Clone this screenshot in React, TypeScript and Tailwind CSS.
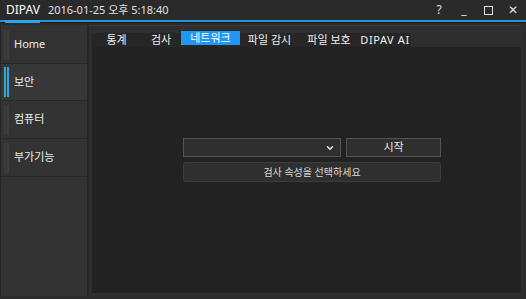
import { ChevronDown } from "lucide-react";

const font = { fontFamily: '"Noto Sans", "Noto Sans CJK KR", sans-serif' };

const menu = [
  { label: "Home", active: false, h: "h-[38px]" },
  { label: "보안", active: true, h: "h-[37px]" },
  { label: "컴퓨터", active: false, h: "h-[38px]" },
  { label: "부가기능", active: false, h: "h-[38px]" },
];

const tabs = [
  { label: "통계", w: "w-[49px]" },
  { label: "검사", w: "w-[40px]" },
  { label: "네트워크", w: "w-[59px]", active: true },
  { label: "파일 감시", w: "w-[59px]" },
  { label: "파일 보호", w: "w-[60px]" },
  { label: "DIPAV AI", w: "w-[52px] tracking-[0.6px]" },
];

export default function App() {
  return (
    <div
      className="w-[526px] h-[299px] bg-[#2c2c2c] flex flex-col overflow-hidden text-[#e8e8e8]"
      style={font}
    >
      {/* title bar */}
      <div className="h-[20px] flex items-center bg-[#2a2a2a] pl-[6px]">
        <span className="text-[12px] text-white">DIPAV</span>
        <span className="ml-[8px] text-[11px] text-[#e0e0e0]">2016-01-25 오후 5:18:40</span>
        <div className="ml-auto flex items-center text-[12px] text-[#e0e0e0]">
          <span className="w-[26px] text-center">?</span>
          <span className="w-[24px] text-center">_</span>
          <span className="w-[24px] flex justify-center">
            <span className="w-[9px] h-[9px] border border-[#e0e0e0]" />
          </span>
          <span className="w-[26px] text-center">✕</span>
        </div>
      </div>
      <div className="h-[3px] bg-[#1c1c1c] relative">
        <div className="h-[2px] bg-[#2596e0]" />
        <div className="absolute left-[5px] top-0 w-[35px] h-[3px] bg-[#2aa6f0]" />
      </div>

      <div className="flex-1 flex pt-[2px] pb-[3px] pr-[4px]">
        {/* sidebar */}
        <div className="w-[89px] bg-[#333333] border-l border-[#262626] border-r-2 border-r-[#262626] flex flex-col pt-[1px]">
          {menu.map((m) => (
            <div
              key={m.label}
              className={`${m.h} flex items-center border-b border-[#272727] ${
                m.active ? "bg-[#373737]" : ""
              }`}
            >
              <div className="flex gap-[1px] ml-[3px] h-[30px]">
                <div className={`w-[2px] h-full ${m.active ? "bg-[#2aa8e0]" : "bg-[#3e3e3e]"}`} />
                <div className={`w-[2px] h-full ${m.active ? "bg-[#2aa8e0]" : "bg-[#3e3e3e]"}`} />
              </div>
              <span className="ml-[5px] text-[11px] text-[#ececec]">{m.label}</span>
            </div>
          ))}
        </div>

        {/* main panel */}
        <div className="flex-1 bg-[#2e2e2e] border-t border-[#3a3a3a] flex flex-col pt-[7px] pl-[3px] pr-[1px] pb-[3px]">
          <div className="h-[14px] flex">
            <div className="flex bg-[#262626] h-[14px]">
              {tabs.map((t) => (
                <div
                  key={t.label}
                  className={`${t.w} relative flex justify-center text-[11px] leading-[14px] text-[#f0f0f0]`}
                >
                  {t.active ? (
                    <div className="absolute left-0 right-0 -top-[2px] h-[14px] bg-[#2196f3] text-white text-center leading-[14px]">
                      {t.label}
                    </div>
                  ) : (
                    t.label
                  )}
                </div>
              ))}
            </div>
          </div>
          <div className="flex-1 bg-[#222222] flex flex-col pt-[91px] pl-[91px]">
            <div className="w-[258px] flex gap-[5px]">
              <div className="w-[158px] h-[19px] bg-[#2f2f2f] border border-[#555555] flex items-center justify-end pr-[5px]">
                <ChevronDown size={10} strokeWidth={3.5} className="text-[#e8e8e8]" />
              </div>
              <div className="flex-1 h-[19px] bg-[#2f2f2f] border border-[#555555] flex items-center justify-center text-[11px] text-[#e8e8e8]">
                시작
              </div>
            </div>
            <div className="w-[258px] h-[20px] mt-[5px] bg-[#2f2f2f] border border-[#3c3c3c] rounded-[3px] flex items-center justify-center text-[10px] text-[#dcdcdc]">
              검사 속성을 선택하세요
            </div>
          </div>
        </div>
      </div>
    </div>
  );
}
